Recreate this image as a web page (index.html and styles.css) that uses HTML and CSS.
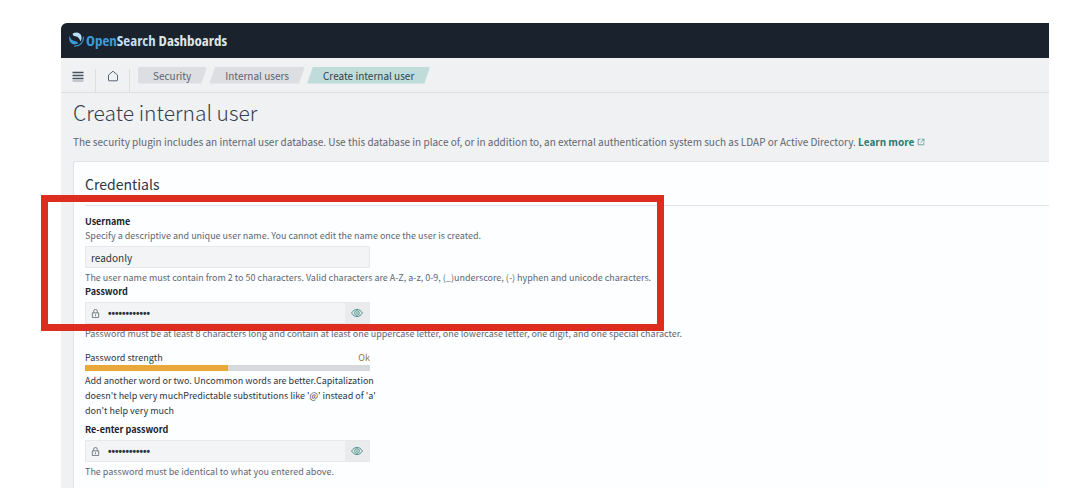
FILE: index.html
```html
<!DOCTYPE html>
<html lang="en">
<head>
	<meta charset="UTF-8">
	<title>Create internal user</title>
	<link rel="stylesheet" href="styles.css">
</head>
<body>
	<div class="app">
		<header class="header">
			<a class="brand" href="#">
				<svg class="logo" viewBox="0 0 16 16" aria-hidden="true">
					<path d="M15.300 5.500c.4 5.500-3.600 9.600-9.300 9.600" fill="none" stroke="#3d9bd8" stroke-width="1.200" stroke-linecap="round"/>
					<path d="M12 10.200c1.200-1.600 1.700-3.600 1.200-5.700C12.200.5 7.800-.500 4 1.600c-.3 1.300.6 2.700 2.700 2.900 3.200.300 4.800 2.500 5.300 5.700z" fill="#b9def5"/>
					<path d="M.8 4C0 6 0 8.700 1.200 10.700c1.900 3 5.800 3.100 8.600 1.400-.4-1.400-1.500-2.100-3.200-2.300C3.200 9.400 1.200 7.200.8 4z" fill="#3d9bd8"/>
				</svg>
				<span><span class="brand-open">Open</span><span class="brand-search">Search</span> Dashboards</span>
			</a>
		</header>

		<nav class="navbar" aria-label="Breadcrumbs">
			<button class="nav-button" type="button" aria-label="Menu">
				<svg class="nav-icon" viewBox="0 0 12 12"><path d="M.5 2.500h11M.5 5.500h11M.5 8.500h11" stroke="#45525f" stroke-width="1.400"/><path d="M.5 11h11" stroke="#7d8690" stroke-width=".8"/></svg>
			</button>
			<button class="nav-button" type="button" aria-label="Home">
				<svg class="nav-icon" viewBox="0 0 12 12"><path d="M1.500 5 6 1.200 10.500 5v5.300a.5.500 0 0 1-.5.500H2a.5.500 0 0 1-.5-.5z" fill="none" stroke="#5b6672"/></svg>
			</button>
			<div class="crumbs">
				<a class="crumb crumb-first" href="#">Security</a>
				<a class="crumb" href="#">Internal users</a>
				<a class="crumb crumb-last" href="#" aria-current="page">Create internal user</a>
			</div>
		</nav>

		<main class="page">
			<h1 class="title">Create internal user</h1>
			<p class="intro">The security plugin includes an internal user database. Use this database in place of, or in addition to, an external authentication system such as LDAP or Active Directory. <a class="learn" href="#">Learn more <svg class="external" viewBox="0 0 10 10"><path d="M4.500 1.500H1.500v7h7v-3M6 1.500h2.800v2.800M8.600 1.700 4.500 5.800" fill="none" stroke="#4c938d"/></svg></a></p>

			<form class="panel">
				<h2 class="panel-title">Credentials</h2>

				<div class="row">
					<label class="label" for="username">Username</label>
					<p class="help">Specify a descriptive and unique user name. You cannot edit the name once the user is created.</p>
					<div class="field">
						<input class="input" id="username" type="text" value="readonly">
					</div>
					<p class="help help-below">The user name must contain from 2 to 50 characters. Valid characters are A-Z, a-z, 0-9, (_)underscore, (-) hyphen and unicode characters.</p>
				</div>

				<div class="row">
					<label class="label" for="password">Password</label>
					<div class="field field-password">
						<svg class="lock" viewBox="0 0 10 10"><path d="M1.500 4.300h7v5.200h-7zM3 4.300V2.500a2 2 0 0 1 4 0v1.800M5 6v2" fill="none" stroke="#69727c"/></svg>
						<input class="input input-password" id="password" type="password" value="abcdefghijkl">
						<button class="reveal" type="button" aria-label="Show password">
							<svg class="eye" viewBox="0 0 12 10"><path d="M.6 5C3.200.2 8.800.2 11.400 5 8.800 9.800 3.200 9.800.6 5z" fill="none" stroke="#4c938d"/><circle cx="6" cy="5" r="2.300" fill="none" stroke="#4c938d"/><path d="M6 4v2" stroke="#4c938d"/></svg>
						</button>
					</div>
					<p class="help help-below">Password must be at least 8 characters long and contain at least one uppercase letter, one lowercase letter, one digit, and one special character.</p>
				</div>

				<div class="strength">
					<div class="strength-head">
						<span>Password strength</span>
						<span class="strength-value">Ok</span>
					</div>
					<div class="bar"><div class="bar-fill" style="width: 50%"></div></div>
				</div>
				<p class="strength-text">Add another word or two. Uncommon words are better.Capitalization doesn't help very muchPredictable substitutions like '@' instead of 'a' don't help very much</p>

				<div class="row">
					<label class="label" for="confirm">Re-enter password</label>
					<div class="field field-password">
						<svg class="lock" viewBox="0 0 10 10"><path d="M1.500 4.300h7v5.200h-7zM3 4.300V2.500a2 2 0 0 1 4 0v1.800M5 6v2" fill="none" stroke="#69727c"/></svg>
						<input class="input input-password" id="confirm" type="password" value="abcdefghijkl">
						<button class="reveal" type="button" aria-label="Show password">
							<svg class="eye" viewBox="0 0 12 10"><path d="M.6 5C3.200.2 8.800.2 11.400 5 8.800 9.800 3.200 9.800.6 5z" fill="none" stroke="#4c938d"/><circle cx="6" cy="5" r="2.300" fill="none" stroke="#4c938d"/><path d="M6 4v2" stroke="#4c938d"/></svg>
						</button>
					</div>
					<p class="help help-below">The password must be identical to what you entered above.</p>
				</div>
			</form>
		</main>
		<div class="highlight"></div>
	</div>
</body>
</html>
```
FILE: styles.css
```css
* {
	box-sizing: border-box;
}
body {
	margin: 0;
	padding: 23px 27px 14px 61px;
	background: #fff;
	color: #343741;
	font-family: "Noto Sans CJK SC", "Noto Sans", sans-serif;
	font-size: 9px;
	line-height: 14px;
}
h1, h2, p {
	margin: 0;
}
a {
	text-decoration: none;
}
button {
	margin: 0;
	padding: 0;
	border: 0;
	background: none;
}
svg {
	display: block;
}
.app {
	position: relative;
	background: #f0f1f3;
	border-radius: 6px 0 0 0;
}
.header {
	display: flex;
	align-items: center;
	height: 35px;
	padding: 0 8px 2px;
	background: #1a232d;
	border-radius: 6px 0 0 0;
}
.brand {
	display: flex;
	align-items: center;
	gap: 2px;
	color: #dfe6e6;
	font-family: "Open Sans", sans-serif;
	font-stretch: 75%;
	font-size: 15px;
	font-weight: 700;
}
.brand-open {
	color: #3d9bd8;
}
.brand-search {
	color: #c3dff0;
}
.logo {
	width: 15px;
	height: 15px;
}
.navbar {
	display: flex;
	height: 35px;
	border-bottom: 1px solid #dcdee2;
}
.nav-button {
	display: flex;
	align-items: center;
	justify-content: center;
	width: 34px;
	margin-top: 11px;
	padding-bottom: 10px;
	border-right: 1px solid #dcdee2;
}
.nav-button:first-child {
	width: 35px;
}
.nav-icon {
	width: 12px;
	height: 12px;
}
.crumbs {
	display: flex;
	align-items: center;
	gap: 2px;
	padding-left: 8px;
}
.crumb {
	height: 17px;
	padding: 0 16px;
	background: #dcdee1;
	color: #5c646e;
	font-size: 10px;
	line-height: 17px;
	border-radius: 2px;
	clip-path: polygon(6px 0, 100% 0, calc(100% - 6px) 100%, 0 100%);
}
.crumb-first {
	padding-left: 15px;
	clip-path: polygon(0 0, 100% 0, calc(100% - 6px) 100%, 0 100%);
}
.crumb-last {
	background: #bfdbda;
	color: #30434c;
}
.page {
	padding: 5px 0 0 12px;
}
.title {
	color: #343f4b;
	font-size: 21px;
	font-weight: 300;
	line-height: 28px;
}
.intro {
	margin-top: 9px;
	color: #5f6672;
	font-size: 10px;
}
.learn {
	color: #2b7a74;
	font-weight: 700;
}
.external {
	display: inline-block;
	width: 8px;
	height: 8px;
}
.panel {
	margin-top: 12px;
	padding: 11px 0 9px 11px;
	background: #fdfeff;
	border: 1px solid #e0e3e8;
	border-width: 1px 0 0 1px;
	border-radius: 3px 0 0 0;
}
.panel-title {
	height: 33px;
	margin-bottom: 9px;
	border-bottom: 1px solid #e0e3e8;
	color: #2b3642;
	font-size: 14px;
	font-weight: 400;
	line-height: 22px;
}
.label {
	display: block;
	color: #1a232d;
	font-weight: 700;
}
.help {
	color: #5f6672;
}
.field {
	display: flex;
	width: 285px;
	height: 22px;
	margin-top: 3px;
	background: #f3f4f6;
	border: 1px solid #e6e8eb;
}
.input {
	flex: 1;
	min-width: 0;
	padding: 0 5px;
	border: 0;
	background: none;
	color: #2b3642;
	font-family: inherit;
	font-size: 10px;
}
.field-password {
	align-items: center;
}
.lock {
	width: 9px;
	height: 9px;
	margin-left: 5px;
}
.input-password {
	padding: 0 8px;
	font-family: "Liberation Sans", sans-serif;
	font-weight: 700;
}
.reveal {
	display: flex;
	align-items: center;
	justify-content: center;
	width: 24px;
	height: 20px;
	background: #e9ebed;
}
.eye {
	width: 12px;
	height: 10px;
}
.help-below {
	margin-top: 3px;
}
.strength {
	width: 285px;
	margin-top: 10px;
	color: #2b3642;
}
.strength-head {
	display: flex;
	justify-content: space-between;
}
.strength-value {
	color: #9b7423;
}
.bar {
	height: 6px;
	background: #d6d8dc;
}
.bar-fill {
	height: 100%;
	background: #e9a93a;
}
.strength-text {
	max-width: 298px;
	margin: 2px 0 5px;
	color: #2b3642;
	line-height: 15px;
}
/* red frame round the username and password rows */
.highlight {
	position: absolute;
	top: 172px;
	left: -20px;
	width: 623px;
	height: 136px;
	border: 7px solid #dc2d1f;
}
```
